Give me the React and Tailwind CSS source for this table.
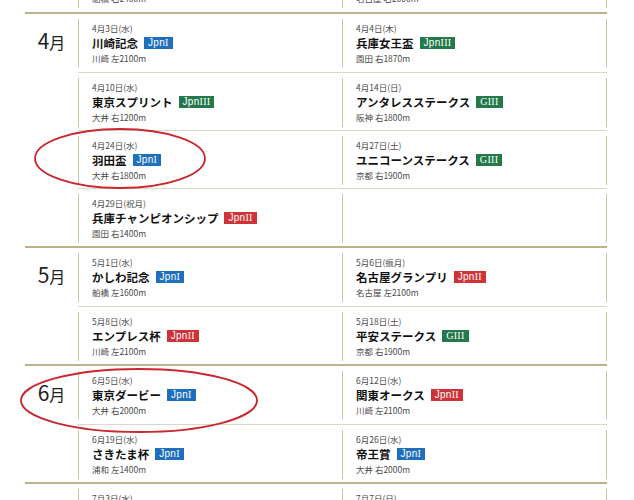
const sections = [
  {
    month: '3',
    rows: [
      [
        { date: '3月20日(水)', title: 'ダイオライト記念', grade: 'JpnII', venue: '船橋 右2400m' },
        { date: '3月27日(水)', title: '名古屋大賞典', grade: 'JpnIII', venue: '名古屋 右2000m' },
      ],
    ],
  },
  {
    month: '4',
    rows: [
      [
        { date: '4月3日(水)', title: '川崎記念', grade: 'JpnI', venue: '川崎 左2100m' },
        { date: '4月4日(木)', title: '兵庫女王盃', grade: 'JpnIII', venue: '園田 右1870m' },
      ],
      [
        { date: '4月10日(水)', title: '東京スプリント', grade: 'JpnIII', venue: '大井 右1200m' },
        { date: '4月14日(日)', title: 'アンタレスステークス', grade: 'GIII', venue: '阪神 右1800m' },
      ],
      [
        { date: '4月24日(水)', title: '羽田盃', grade: 'JpnI', venue: '大井 右1800m' },
        { date: '4月27日(土)', title: 'ユニコーンステークス', grade: 'GIII', venue: '京都 右1900m' },
      ],
      [
        { date: '4月29日(祝月)', title: '兵庫チャンピオンシップ', grade: 'JpnII', venue: '園田 右1400m' },
        null,
      ],
    ],
  },
  {
    month: '5',
    rows: [
      [
        { date: '5月1日(水)', title: 'かしわ記念', grade: 'JpnI', venue: '船橋 左1600m' },
        { date: '5月6日(振月)', title: '名古屋グランプリ', grade: 'JpnII', venue: '名古屋 左2100m' },
      ],
      [
        { date: '5月8日(水)', title: 'エンプレス杯', grade: 'JpnII', venue: '川崎 左2100m' },
        { date: '5月18日(土)', title: '平安ステークス', grade: 'GIII', venue: '京都 右1900m' },
      ],
    ],
  },
  {
    month: '6',
    rows: [
      [
        { date: '6月5日(水)', title: '東京ダービー', grade: 'JpnI', venue: '大井 右2000m' },
        { date: '6月12日(水)', title: '関東オークス', grade: 'JpnII', venue: '川崎 左2100m' },
      ],
      [
        { date: '6月19日(水)', title: 'さきたま杯', grade: 'JpnI', venue: '浦和 左1400m' },
        { date: '6月26日(水)', title: '帝王賞', grade: 'JpnI', venue: '大井 右2000m' },
      ],
    ],
  },
  {
    month: '7',
    rows: [
      [
        { date: '7月3日(水)', title: 'スパーキングレディーカップ', grade: 'JpnIII', venue: '川崎 左1600m' },
        { date: '7月7日(日)', title: 'プロキオンステークス', grade: 'GIII', venue: '小倉 右1700m' },
      ],
    ],
  },
];

const Badge = ({ grade }) => {
  const tone =
    grade === 'JpnI' ? 'bg-[#1f6fbd]' : grade === 'JpnII' ? 'bg-[#cf3338]' : 'bg-[#23794a]';
  const isG = grade.startsWith('G');
  const num = grade.slice(isG ? 1 : 3);
  return (
    <span
      className={`ml-[6px] inline-flex h-[12px] items-center px-[4px] text-[10px] leading-none tracking-[0.3px] text-white ${tone}`}
    >
      {isG ? (
        <span className="font-['Liberation_Serif',serif]">G</span>
      ) : (
        <span className="font-['Liberation_Sans',sans-serif]">Jpn</span>
      )}
      <span className="font-['Liberation_Serif',serif]">{num}</span>
    </span>
  );
};

const Card = ({ ev, right }) => (
  <div className="pt-[5px]">
    <div
      className={`h-[49px] border-l border-[#cdc4a3] pl-[13px] pt-[3px] ${right ? 'border-r' : ''}`}
    >
      {ev && (
        <>
          <p className="text-[8.5px] leading-[12px] text-[#4a4a4a]">{ev.date}</p>
          <div className="mt-[1px] flex h-[16px] items-center">
            <span className="text-[11.5px] font-bold leading-[16px] text-[#111]">{ev.title}</span>
            <Badge grade={ev.grade} />
          </div>
          <p className="mt-[1px] text-[8.5px] leading-[12px] text-[#4a4a4a]">{ev.venue}</p>
        </>
      )}
    </div>
  </div>
);

const Section = ({ month, rows }) => (
  <section className="flex w-[582px] border-t-2 border-[#bbb384]">
    <div className="w-[53px] shrink-0 pt-[13px] text-center leading-[26px] text-[#222]">
      <span className="text-[21px]">{month}</span>
      <span className="text-[16px]">月</span>
    </div>
    <div className="flex-1">
      {rows.map((row, i) => (
        <div
          key={i}
          className={`grid h-[58px] grid-cols-[264px_1fr] ${i ? 'border-t border-[#dcd7c6]' : ''}`}
        >
          <Card ev={row[0]} />
          <Card ev={row[1]} right />
        </div>
      ))}
    </div>
  </section>
);

export default function App() {
  return (
    <div className="relative h-[500px] w-[634px] overflow-hidden bg-white font-['Noto_Sans_CJK_JP',sans-serif]">
      <div className="-mt-[48px] pl-[25px]">
        {sections.map((s) => (
          <Section key={s.month} month={s.month} rows={s.rows} />
        ))}
      </div>
      {/* red circles marking highlighted races */}
      <svg className="pointer-events-none absolute inset-0" width="634" height="500">
        <ellipse cx="120" cy="158.5" rx="85" ry="29.5" fill="none" stroke="#c8282e" strokeWidth="1.8" />
        <ellipse cx="139" cy="400.5" rx="118" ry="31.5" fill="none" stroke="#c8282e" strokeWidth="1.8" />
      </svg>
    </div>
  );
}
